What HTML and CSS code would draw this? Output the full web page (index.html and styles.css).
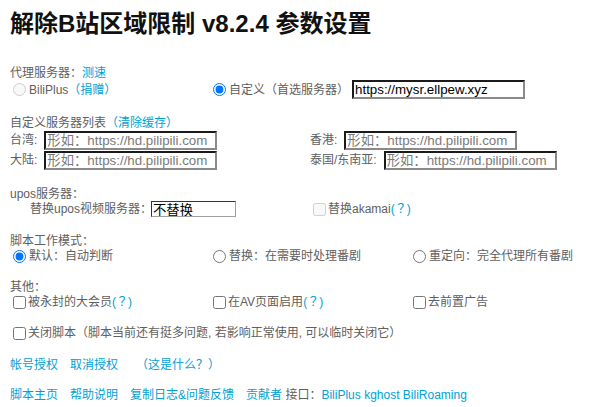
FILE: index.html
```html
<!DOCTYPE html>
<html lang="zh-CN">
<head>
<meta charset="utf-8">
<title>解除B站区域限制 参数设置</title>
<link rel="stylesheet" href="styles.css">
</head>
<body>
<div class="page">
  <h1 class="title">解除B站区域限制 v8.2.4 参数设置</h1>

  <div class="lbl lbl-proxy">代理服务器<span class="p">：</span><a class="link" href="#">测速</a></div>
  <div class="row grid-proxy">
    <label class="cell"><input class="radio" type="radio" name="server" disabled><span>BiliPlus</span><a class="link" href="#">（捐赠）</a></label>
    <label class="cell"><input class="radio" type="radio" name="server" checked><span>自定义（首选服务器）</span><input class="text url" type="text" value="https://mysr.ellpew.xyz"></label>
  </div>

  <div class="lbl lbl-list">自定义服务器列表<a class="link" href="#">（清除缓存）</a></div>
  <div class="srv grid2">
    <div class="cell"><span>台湾:</span><input class="text srv-input" type="text" placeholder="形如：https://hd.pilipili.com"></div>
    <div class="cell"><span>香港:</span><input class="text srv-input" type="text" placeholder="形如：https://hd.pilipili.com"></div>
  </div>
  <div class="srv grid2">
    <div class="cell"><span>大陆:</span><input class="text srv-input" type="text" placeholder="形如：https://hd.pilipili.com"></div>
    <div class="cell"><span>泰国/东南亚:</span><input class="text srv-input" type="text" placeholder="形如：https://hd.pilipili.com"></div>
  </div>

  <div class="lbl lbl-upos">upos服务器<span class="p">：</span></div>
  <div class="row-upos grid2">
    <div class="cell indent"><span>替换upos视频服务器<span class="p">：</span></span><input class="upos" type="text" value="不替换"></div>
    <label class="cell"><input class="check" type="checkbox" disabled><span>替换akamai</span><a class="link" href="#">(<span class="p">？</span>)</a></label>
  </div>

  <div class="lbl lbl-mode">脚本工作模式<span class="p">：</span></div>
  <div class="row grid3">
    <label class="cell"><input class="radio" type="radio" name="mode" checked><span>默认<span class="p">：</span>自动判断</span></label>
    <label class="cell"><input class="radio" type="radio" name="mode"><span>替换<span class="p">：</span>在需要时处理番剧</span></label>
    <label class="cell"><input class="radio" type="radio" name="mode"><span>重定向<span class="p">：</span>完全代理所有番剧</span></label>
  </div>

  <div class="lbl lbl-other">其他<span class="p">：</span></div>
  <div class="row grid3">
    <label class="cell"><input class="check" type="checkbox"><span>被永封的大会员</span><a class="link" href="#">(<span class="p">？</span>)</a></label>
    <label class="cell"><input class="check" type="checkbox"><span>在AV页面启用</span><a class="link" href="#">(<span class="p">？</span>)</a></label>
    <label class="cell"><input class="check" type="checkbox"><span>去前置广告</span></label>
  </div>

  <div class="row row-close">
    <label class="cell"><input class="check" type="checkbox"><span>关闭脚本（脚本当前还有挺多问题, 若影响正常使用, 可以临时关闭它）</span></label>
  </div>

  <div class="foot foot-auth"><a class="link sep" href="#">帐号授权</a><a class="link" href="#">取消授权</a><a class="link what" href="#">（这是什么<span class="p">？</span>）</a></div>

  <div class="foot foot-links"><a class="link sep" href="#">脚本主页</a><a class="link sep" href="#">帮助说明</a><a class="link sep" href="#">复制日志&amp;问题反馈</a><a class="link" href="#">贡献者</a> 接口<span class="p">：</span><a class="link" href="#">BiliPlus</a> <a class="link" href="#">kghost</a> <a class="link" href="#">BiliRoaming</a></div>
</div>
</body>
</html>
```

FILE: styles.css
```css
html, body {
  margin: 0;
  padding: 0;
  background: #ffffff;
}

body {
  font-family: "Liberation Sans", "Noto Sans CJK SC", sans-serif;
  font-size: 12px;
  color: #606060;
}

.page {
  width: 600px;
  padding: 0 10px;
}

.title {
  margin: 10px 0 0;
  height: 28px;
  line-height: 28px;
  font-size: 24px;
  font-weight: bold;
  color: #111111;
  white-space: nowrap;
}

.link {
  color: #00a1d6;
  text-decoration: none;
}

/* full-width punctuation centred in the em box, as in the reference */
.p {
  font-family: "Liberation Sans", "Noto Sans CJK TC", "Noto Sans CJK SC", sans-serif;
}

.lbl {
  height: 14px;
  line-height: 14px;
  white-space: nowrap;
}

.lbl-proxy { margin-top: 28px; }
.lbl-list { margin-top: 20px; }
.lbl-upos { margin-top: 17px; }
.lbl-mode { margin-top: 19px; }
.lbl-other { margin-top: 16px; }

.row {
  height: 16px;
}

.grid-proxy {
  display: grid;
  grid-template-columns: 200px 400px;
}

.grid2 {
  display: grid;
  grid-template-columns: 300px 300px;
}

.grid3 {
  display: grid;
  grid-template-columns: 200px 200px 200px;
}

.cell {
  display: flex;
  align-items: center;
  height: 100%;
  white-space: nowrap;
  line-height: 14px;
}

.srv {
  height: 20px;
}

.row-upos {
  height: 14px;
}

.indent {
  padding-left: 20px;
}

.radio,
.check {
  width: 13px;
  height: 13px;
  margin: 0 3px 0 3px;
  flex: none;
}

.check {
  margin-right: 2px;
}

.text {
  box-sizing: border-box;
  width: 173px;
  height: 19px;
  padding: 0 1px;
  border-width: 2px;
  border-style: solid;
  border-color: #1a1a1a #8a8a8a #8a8a8a #1a1a1a;
  font-family: "Liberation Sans", "Noto Sans CJK TC", "Noto Sans CJK SC", sans-serif;
  font-size: 13.33px;
  color: #000000;
  background: #ffffff;
  outline: none;
  flex: none;
}

.text::placeholder {
  color: #7a7a7a;
}

.url {
  margin-left: 3px;
}

.srv-input {
  margin-left: 7px;
}

.upos {
  box-sizing: border-box;
  width: 85px;
  height: 16px;
  margin-left: -1px;
  padding: 0 1px;
  border: 1px solid;
  border-color: #333333 #a0a0a0 #a0a0a0 #333333;
  font-family: "Liberation Sans", "Noto Sans CJK SC", sans-serif;
  font-size: 13.33px;
  color: #000000;
  background: #ffffff;
  outline: none;
  flex: none;
}

.row-close {
  margin-top: 15px;
}

.foot {
  height: 15px;
  line-height: 15px;
  white-space: nowrap;
}

.foot-auth { margin-top: 17px; }
.foot-links { margin-top: 15px; }

.sep {
  margin-right: 12px;
}

.what {
  margin-left: 18px;
}
```
